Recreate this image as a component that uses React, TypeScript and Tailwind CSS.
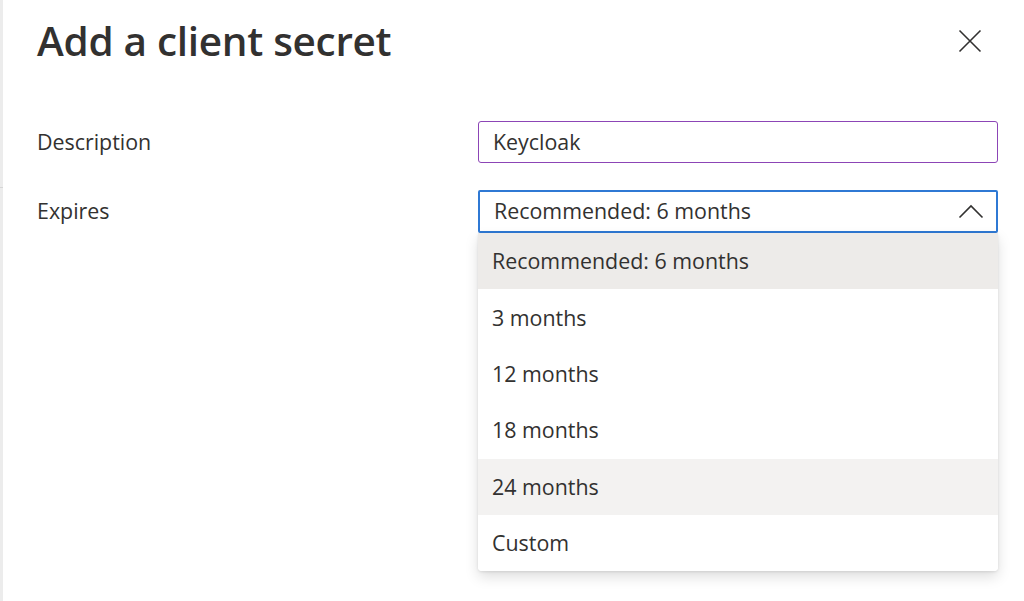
import React from 'react';

const options = [
  { label: 'Recommended: 6 months', bg: 'bg-[#edebe9]' },
  { label: '3 months', bg: 'bg-white' },
  { label: '12 months', bg: 'bg-white' },
  { label: '18 months', bg: 'bg-white' },
  { label: '24 months', bg: 'bg-[#f3f2f1]' },
  { label: 'Custom', bg: 'bg-white' },
];

export default function App() {
  return (
    <div className="w-[1024px] h-[601px] bg-white flex overflow-hidden text-[#323130] font-['Open_Sans',sans-serif]">
      {/* pane edge behind the panel */}
      <div className="w-[3px] shrink-0 bg-[#ececec] flex flex-col">
        <div className="h-[187px]" />
        <div className="h-px bg-[#d6d6d6]" />
      </div>

      <div className="flex-1 pl-[34px] pr-[26px]">
        <div className="flex items-center justify-between h-[84px] pb-[2px]">
          <h1 className="text-[40.5px] font-semibold tracking-[-0.3px]">Add a client secret</h1>
          <button className="w-[40px] h-[40px] flex items-center justify-center mr-[8px]">
            <svg width="24" height="24" viewBox="0 0 24 24" fill="none">
              <path d="M1.5 1.5L22.5 22.5M22.5 1.5L1.5 22.5" stroke="#323130" strokeWidth="1.6" />
            </svg>
          </button>
        </div>

        <div className="flex flex-col gap-[27px] mt-[37px]">
          <div className="flex items-center h-[42px]">
            <label className="w-[441px] text-[21.4px]">Description</label>
            <div className="flex-1 h-[42px] border-[1.5px] border-[#8c45b6] rounded-[3px] flex items-center pl-[14px] text-[21.4px]">
              Keycloak
            </div>
          </div>

          <div className="flex items-center h-[43px]">
            <label className="w-[441px] text-[21.4px]">Expires</label>
            <div className="flex-1 relative">
              <div className="h-[43px] border-2 border-[#2f79d4] rounded-[2px] flex items-center justify-between pl-[14px] pr-[12px] text-[21.4px]">
                <span>Recommended: 6 months</span>
                <svg width="26" height="16" viewBox="0 0 26 16" fill="none">
                  <path d="M1.5 13.5L13 2L24.5 13.5" stroke="#323130" strokeWidth="1.6" />
                </svg>
              </div>
              <div className="absolute left-0 right-0 top-[43px] rounded-b-[4px] overflow-hidden bg-white shadow-[0_6px_14px_rgba(0,0,0,0.13),0_1px_3px_rgba(0,0,0,0.1)] z-10">
                {options.map((o) => (
                  <div key={o.label} className={`h-[56.4px] flex items-center pl-[14px] text-[21.4px] ${o.bg}`}>
                    {o.label}
                  </div>
                ))}
              </div>
            </div>
          </div>
        </div>
      </div>
    </div>
  );
}
